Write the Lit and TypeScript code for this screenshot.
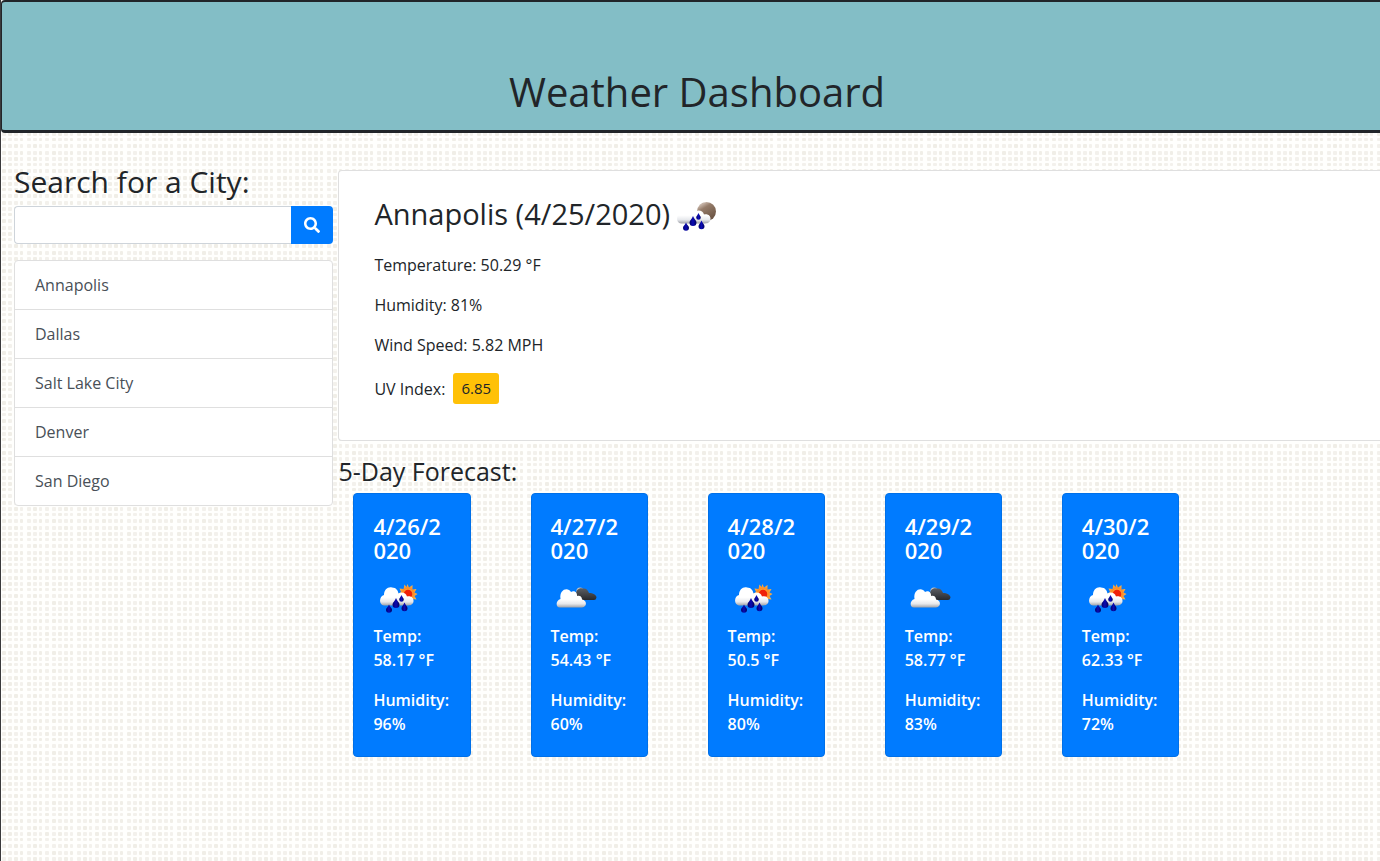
import { LitElement, html, css, svg } from "lit";
import { customElement, property } from "lit/decorators.js";

type Sky = "rain-day" | "rain-night" | "cloudy";

@customElement("weather-icon")
class WeatherIcon extends LitElement {
  @property() sky: Sky = "cloudy";

  static styles = css`
    :host { display: block; width: 50px; height: 50px; flex: none; }
    svg { display: block; width: 50px; height: 50px; }
  `;

  render() {
    const behind =
      this.sky === "rain-day"
        ? svg`<path fill="url(#ray)" d="M34.500 10l1.500 3.500 3.500-2.500 0 4.500 4-.5-2 3.500 3 1.500-3 2 2 3.500-4-.5 0 4-3.500-2-3 2-2-4-4 1 1-4-3-2 3-2-1.500-3.500 4 .5 1-4.500 2 2.500z"/>
            <circle cx="35" cy="19.500" r="5" fill="#ff9d2e"/><circle cx="35" cy="20" r="4.300" fill="#f02008"/>`
        : this.sky === "rain-night"
          ? svg`<circle cx="36.5" cy="19.5" r="9.5" fill="url(#moon)"/>`
          : svg`<circle cx="29" cy="17" r="3.6" fill="#c3c5c8"/>
            <path fill="url(#dark)" d="M25 26V20C25 16 28 13.500 32 14.500C35 14 37 16 38 19C42 19 45.500 21 45.500 23.500Q45 26 43 26Z"/>`;
    const cloud =
      this.sky === "cloudy"
        ? svg`<path fill="url(#cloud)" d="M9 33.500C4.500 33.500 4.500 26.500 9.500 25C8 15 17 12.500 20 18C23 16 26.500 18.500 26 22C29 21 31 23 31 25.500C36 26 36.500 33 31 33.500Z"/>`
        : svg`<path fill="url(#cloud)" d="M11 31.500C5.500 31 6 22 11 21C11 15.500 15 12.500 19 13.500C23 13.500 25 16.500 25.500 19.500C29 17.500 33 19 34 22.500C38 21.500 41 24 40.500 27.500C40 31 37 31.500 34 31.500Z"/>
          <g fill="url(#drop)">
            <path d="M23 24C24 27 26.500 28.500 26.500 30.500A3.500 3.500 0 0 1 19.500 30.500C19.500 28.500 22 27 23 24z"/>
            <path d="M16 30.500C17 33 19 34 19 35.800A3 3 0 0 1 13 35.800C13 34 15 33 16 30.500z"/>
            <path d="M28.500 21C29.500 23.500 30.800 24 30.800 25.500A2.300 2.300 0 0 1 26.200 25.500C26.200 24 27.500 23.500 28.500 21z"/>
            <path d="M31.500 28.500C32.500 31 34.500 32.500 34.500 34.300A3 3 0 0 1 28.500 34.300C28.500 32.500 30.500 31 31.500 28.500z"/>
          </g>`;
    return html`<svg viewBox="0 0 50 50" aria-hidden="true">
      <defs>
        <linearGradient id="cloud" x1="0" y1="0" x2="0" y2="1">
          <stop offset="0.55" stop-color="#fff" /><stop offset="0.8" stop-color="#e6e8ec" /><stop offset="1" stop-color="#a0a2a8" />
        </linearGradient>
        <linearGradient id="dark" x1="0" y1="0" x2="0" y2="1">
          <stop offset="0" stop-color="#5d5f64" /><stop offset="1" stop-color="#27292e" />
        </linearGradient>
        <radialGradient id="ray"><stop offset="0.4" stop-color="#ff7a18" /><stop offset="1" stop-color="#f7b84f" /></radialGradient>
        <linearGradient id="moon" x1="0" y1="0" x2="0.6" y2="1">
          <stop offset="0" stop-color="#76604f" /><stop offset="0.2" stop-color="#c6b4a7" /><stop offset="0.4" stop-color="#947b69" /><stop offset="1" stop-color="#6b5342" />
        </linearGradient>
        <linearGradient id="drop" x1="0" y1="0" x2="1" y2="0">
          <stop offset="0" stop-color="#00006b" /><stop offset="0.5" stop-color="#0a0ab4" /><stop offset="1" stop-color="#00005c" />
        </linearGradient>
      </defs>
      ${behind}${cloud}
    </svg>`;
  }
}

interface Day {
  date: string;
  sky: Sky;
  temp: string;
  humidity: string;
}

@customElement("app-root")
class AppRoot extends LitElement {
  private cities = ["Annapolis", "Dallas", "Salt Lake City", "Denver", "San Diego"];
  private days: Day[] = [
    { date: "4/26/2020", sky: "rain-day", temp: "58.17", humidity: "96" },
    { date: "4/27/2020", sky: "cloudy", temp: "54.43", humidity: "60" },
    { date: "4/28/2020", sky: "rain-day", temp: "50.5", humidity: "80" },
    { date: "4/29/2020", sky: "cloudy", temp: "58.77", humidity: "83" },
    { date: "4/30/2020", sky: "rain-day", temp: "62.33", humidity: "72" },
  ];

  static styles = css`
    * { box-sizing: border-box; }
    :host {
      display: block;
      position: relative;
      min-height: 100vh;
      border-left: 1px solid #3a3a3c;
      font: 400 16px/24px "Open Sans", sans-serif;
      color: #212529;
      background: #fffffd;
    }
    h1, h2, h3, h4, p, ul { margin: 0; padding: 0; font-weight: 400; }
    .weave { position: absolute; inset: 0; width: 100%; height: 100%; }
    .page { position: relative; }
    header {
      padding: 66px 0 14px 12px;
      border: solid #212529;
      border-width: 2px 0 3px 1px;
      border-radius: 4px 0 0 4px;
      background: #83bec6;
      text-align: center;
    }
    h1 { font-size: 40px; line-height: 48px; }
    .layout {
      display: grid;
      grid-template-columns: 23fr 75fr;
      column-gap: 5px;
      align-items: start;
      padding: 33px 0 0 13px;
    }
    h2 { font-size: 30px; line-height: 32px; }
    .search { display: flex; height: 38px; margin: 8px 0 16px; }
    .search input {
      flex: 1;
      min-width: 0;
      padding: 6px 12px;
      border: 1px solid #ced4da;
      border-right: 0;
      border-radius: 4px 0 0 4px;
      background: #fff;
      font: inherit;
      color: #495057;
    }
    .search button {
      display: grid;
      place-items: center;
      width: 42px;
      padding: 0;
      border: 0;
      border-radius: 0 4px 4px 0;
      background: #007bff;
      color: #fff;
    }
    .search svg { width: 16px; height: 16px; }
    .cities {
      list-style: none;
      border: 1px solid #dfdfdf;
      border-radius: 4px;
      background: #fff;
      overflow: hidden;
    }
    .cities li + li { border-top: 1px solid #dfdfdf; }
    .cities button {
      display: block;
      width: 100%;
      padding: 12px 20px;
      border: 0;
      background: none;
      font: inherit;
      color: #495057;
      text-align: left;
    }
    .main { padding-top: 4px; }
    .current {
      display: grid;
      justify-items: start;
      gap: 16px;
      padding: 20px 35px 36px;
      border: 1px solid #dfdfdf;
      border-right: 0;
      border-radius: 4px 0 0 4px;
      background: #fff;
    }
    .place { display: flex; align-items: center; height: 46px; font-size: 29px; }
    .place weather-icon { margin-top: 6px; }
    .uv { display: flex; align-items: center; gap: 8px; }
    .badge {
      padding: 5px 8px;
      border-radius: 3px;
      background: #ffc107;
      font-size: 15px;
      line-height: 21px;
    }
    h3 { margin: 16px 0 8px; font-size: 25px; line-height: 28px; }
    .forecast {
      display: grid;
      grid-template-columns: repeat(6, 1fr);
      gap: 60px;
      padding: 0 24px 40px 15px;
    }
    .day {
      padding: 20px 19px 20px;
      border: 1px solid #0070e8;
      border-radius: 4px;
      background: #007bff;
      color: #fff;
    }
    .day h4 {
      margin-bottom: 12px;
      font-size: 22px;
      font-weight: 600;
      line-height: 24px;
      overflow-wrap: anywhere;
    }
    .day p { font-size: 16px; font-weight: 600; }
    .day p + p { margin-top: 16px; }
  `;

  render() {
    const steps = [1, 7, 13, 19, 26, 32, 38, 44];
    return html`
      <svg class="weave" aria-hidden="true">
        <defs>
          <pattern id="cloth" width="50" height="50" patternUnits="userSpaceOnUse">
            ${steps.map((y, r) =>
              steps.map(
                (x, c) => svg`<rect x=${x} y=${y} width=${c === 3 || c === 6 ? 3 : 4} height=${r % 4 === 2 ? 3 : 4} rx="1" fill=${(r + c) % 3 ? "#f3f1ec" : "#f0eee7"}/>`
              )
            )}
          </pattern>
        </defs>
        <rect width="100%" height="100%" fill="url(#cloth)" />
      </svg>
      <div class="page">
        <header><h1>Weather Dashboard</h1></header>
        <div class="layout">
          <aside>
            <h2><label for="city">Search for a City:</label></h2>
            <form class="search" @submit=${(e: Event) => e.preventDefault()}>
              <input id="city" type="text" />
              <button type="submit" aria-label="Search">
                <svg viewBox="0 0 512 512" aria-hidden="true">
                  <path fill="currentColor" d="M505 442.700L405.300 343c-4.500-4.500-10.600-7-17-7H372c27.600-35.300 44-79.700 44-128C416 93.100 322.900 0 208 0S0 93.100 0 208s93.100 208 208 208c48.300 0 92.700-16.400 128-44v16.300c0 6.400 2.500 12.500 7 17l99.700 99.700c9.400 9.400 24.600 9.400 33.900 0l28.300-28.300c9.400-9.400 9.400-24.600.1-34zM208 336c-70.700 0-128-57.200-128-128 0-70.700 57.200-128 128-128 70.700 0 128 57.200 128 128 0 70.700-57.200 128-128 128z" />
                </svg>
              </button>
            </form>
            <ul class="cities">
              ${this.cities.map((c) => html`<li><button type="button">${c}</button></li>`)}
            </ul>
          </aside>
          <main class="main">
            <section class="current">
              <h2 class="place">Annapolis (4/25/2020)<weather-icon sky="rain-night"></weather-icon></h2>
              <p>Temperature: 50.29 °F</p>
              <p>Humidity: 81%</p>
              <p>Wind Speed: 5.82 MPH</p>
              <p class="uv">UV Index: <span class="badge">6.85</span></p>
            </section>
            <h3>5-Day Forecast:</h3>
            <section class="forecast">
              ${this.days.map(
                (d) => html`<article class="day">
                  <h4>${d.date}</h4>
                  <weather-icon sky=${d.sky}></weather-icon>
                  <p>Temp: ${d.temp} °F</p>
                  <p>Humidity: ${d.humidity}%</p>
                </article>`
              )}
            </section>
          </main>
        </div>
      </div>
    `;
  }
}
